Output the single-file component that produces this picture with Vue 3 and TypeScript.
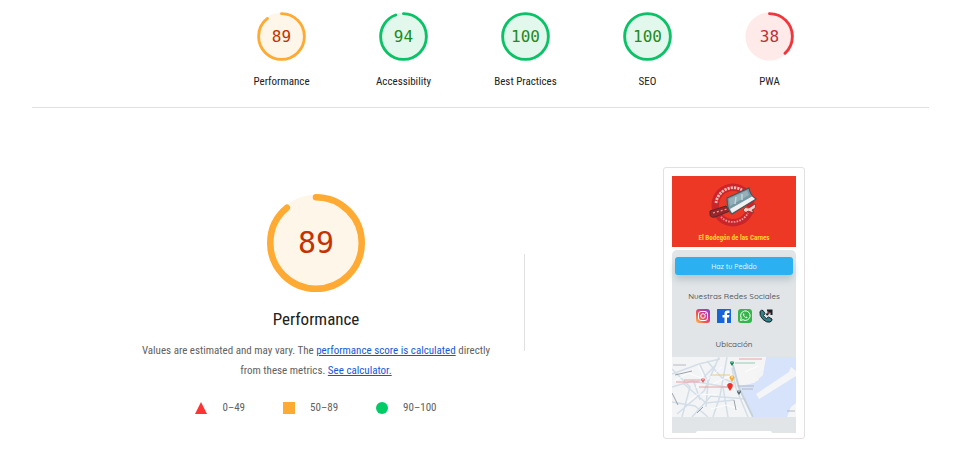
<script setup lang="ts">
type Level = 'pass' | 'average' | 'fail'

interface Category {
  id: string
  title: string
  score: number
}

const categories: Category[] = [
  { id: 'performance', title: 'Performance', score: 89 },
  { id: 'accessibility', title: 'Accessibility', score: 94 },
  { id: 'best-practices', title: 'Best Practices', score: 100 },
  { id: 'seo', title: 'SEO', score: 100 },
  { id: 'pwa', title: 'PWA', score: 38 },
]

const level = (score: number): Level =>
  score >= 90 ? 'pass' : score >= 50 ? 'average' : 'fail'

const dash = (score: number): string => (score === 100 ? 'none' : `${score} 100`)
</script>

<template>
  <main class="report">
    <nav class="categories" aria-label="Categories">
      <a
        v-for="c in categories"
        :key="c.id"
        class="category"
        :class="level(c.score)"
        :href="`#${c.id}`"
      >
        <span class="gauge">
          <svg viewBox="0 0 120 120" aria-hidden="true">
            <circle class="base" cx="60" cy="60" r="59" />
            <circle
              class="arc"
              cx="60"
              cy="60"
              r="56"
              pathLength="100"
              :stroke-dasharray="dash(c.score)"
              transform="rotate(-90 60 60)"
            />
          </svg>
          <span class="score">{{ c.score }}</span>
        </span>
        <span class="category-title">{{ c.title }}</span>
      </a>
    </nav>

    <section id="performance" class="detail">
      <div class="summary">
        <div class="gauge large average">
          <svg viewBox="0 0 120 120" aria-hidden="true">
            <circle class="base" cx="60" cy="60" r="59" />
            <circle
              class="arc"
              cx="60"
              cy="60"
              r="56"
              pathLength="100"
              stroke-dasharray="89 100"
              transform="rotate(-90 60 60)"
            />
          </svg>
          <span class="score">89</span>
        </div>
        <h1>Performance</h1>
        <p class="description">
          Values are estimated and may vary. The
          <a href="#score">performance score is calculated</a> directly from these metrics.
          <a href="#calculator">See calculator.</a>
        </p>
        <ul class="legend">
          <li>
            <svg viewBox="0 0 12 12" aria-hidden="true"><path d="M6 0 12 12H0Z" fill="#f33" /></svg>
            0–49
          </li>
          <li>
            <svg viewBox="0 0 12 12" aria-hidden="true"><path d="M0 0H12V12H0Z" fill="#fa3" /></svg>
            50–89
          </li>
          <li>
            <svg viewBox="0 0 12 12" aria-hidden="true"><circle cx="6" cy="6" r="6" fill="#0c6" /></svg>
            90–100
          </li>
        </ul>
      </div>

      <div class="preview">
        <div class="phone">
          <header class="banner">
            <svg class="logo" viewBox="0 0 50 46" aria-hidden="true">
              <circle cx="24" cy="23" r="21.500" fill="#c9252b" />
              <circle cx="24" cy="23" r="14" fill="#ed3826" />
              <path d="M7 21A17.500 17.500 0 0 1 33 8" fill="none" stroke="#f3b9b4" stroke-width="2.800" stroke-dasharray="2.200 1" />
              <path d="M12 35A17 17 0 0 0 39 31" fill="none" stroke="#e99f9b" stroke-width="1.800" stroke-dasharray="1.600 1.200" />
              <path d="M1 29 17 24 21 29 6 35Q1 36 1 32Z" fill="#98252b" stroke="#5e2528" />
              <path d="M4 31 18 27" stroke="#ed9c91" stroke-width="1.200" stroke-dasharray="2 2" />
              <path d="M18 16 40 6Q41 13 47 17L23 32Q18 29 18 16Z" fill="#7897a5" stroke="#4b5359" stroke-width="1.200" />
              <path d="M20 17 38 8.500 40 13 21 24Z" fill="#94b0bb" />
              <path d="M21 27 43 14.500 46 17 23 31Z" fill="#f1f2ef" />
              <path d="M27 15 26 22M33 12 33 18" stroke="#c3d3d8" stroke-width="1.500" />
              <path d="M34 28Q36 24 40 26L46 22Q48 26 43 28L45 31 39 29Q37 32 34 28Z" fill="#f5cdc6" stroke="#80332e" stroke-width=".8" />
            </svg>
            <strong>El Bodegón de las Carnes</strong>
          </header>
          <div class="page">
            <button type="button" class="order">Haz tu Pedido</button>
            <h2>Nuestras Redes Sociales</h2>
            <div class="social">
              <a href="#instagram" aria-label="Instagram">
                <svg viewBox="0 0 28 28">
                  <defs>
                    <linearGradient id="ig" x1="0" y1="1" x2="1" y2="0">
                      <stop offset="0" stop-color="#ffc25a" />
                      <stop offset=".35" stop-color="#f5564c" />
                      <stop offset=".65" stop-color="#c73b9b" />
                      <stop offset="1" stop-color="#7446cf" />
                    </linearGradient>
                  </defs>
                  <rect width="28" height="28" rx="6" fill="url(#ig)" />
                  <g fill="none" stroke="#fff" stroke-width="2">
                    <rect x="5" y="5" width="18" height="18" rx="5" />
                    <circle cx="14" cy="14" r="4.5" />
                  </g>
                  <circle cx="19.5" cy="8.5" r="1.3" fill="#fff" />
                </svg>
              </a>
              <a href="#facebook" aria-label="Facebook">
                <svg viewBox="0 0 28 28">
                  <rect width="28" height="28" rx="1" fill="#1764d8" />
                  <path d="M15 28V17H11V12H15V9Q15 3 21 3H25V8H22Q20 8 20 10V12H25L24 17H20V28Z" fill="#fff" />
                </svg>
              </a>
              <a href="#whatsapp" aria-label="WhatsApp">
                <svg viewBox="0 0 28 28">
                  <rect width="28" height="28" rx="6" fill="#35b64a" />
                  <path d="M5 23 6.5 18A9.5 9.5 0 1 1 10 21.5Z" fill="none" stroke="#fff" stroke-width="2" />
                  <path d="M10.5 9Q9 10 10 12.5Q12.5 18 17 18.5Q19 18.5 19 16.5L16.5 15 15 16.3Q13 15.5 12 13.5L13 12 12 9Z" fill="#fff" />
                </svg>
              </a>
              <a href="#phone" aria-label="Phone">
                <svg viewBox="0 0 28 28">
                  <path d="M2 5Q5 1 8 3L12 9 9 13Q11 17 15 19L19 16 26 20Q27 24 22 26Q16 28 8 21Q0 13 2 5Z" fill="#32828a" stroke="#172126" stroke-width="2" stroke-linejoin="round" />
                  <path d="M15 12 23 4M16 3H25V12" fill="none" stroke="#172126" stroke-width="4" />
                  <path d="M17 10 21 6" stroke="#ef5660" stroke-width="2" />
                </svg>
              </a>
            </div>
            <h2>Ubicación</h2>
            <svg class="map" viewBox="0 0 124 60" role="img" aria-label="Map">
              <rect width="124" height="60" fill="#f3f4f6" />
              <path d="M94 0H124V60H82L72 40 65 28 82 26 91 18Z" fill="#d7e3fb" />
              <path d="M65 0H94L91 12 84 17 87 23 78 27 67 29 60 12Z" fill="#f5f5f5" />
              <path d="M84 37 117 15 119 10 124 14V19L87 42Z" fill="#f4f5f7" />
              <path d="M115 60 119 50 124 46V60Z" fill="#f4f5f7" />
              <g fill="none" stroke="#d4dee7" stroke-width="1.5">
                <path d="M0 17 27 7 48 2M0 30 20 24 60 31M5 57 32 34 47 0M0 45 23 49 36 60M12 27 34 46 62 43M35 4 50 21 64 27M41 60 48 39 55 0M20 60 39 39 74 42M60 11 64 31 76 60M0 12 18 30 10 60" />
                <path d="M28 8 36 25 34 50M44 8 32 20M51 30 56 60M22 25 28 43" />
              </g>
              <g fill="none" stroke="#fff" stroke-width=".8">
                <path d="M2 24 16 16 35 23 50 10M15 45 26 37 45 38M26 8 31 18 24 31M39 52 54 48 67 52M41 27 60 18M73 15 86 9" />
              </g>
              <path d="M61 8 67 31 81 60" fill="none" stroke="#c6d2da" stroke-width="2" />
              <g fill="none" stroke="#858d97" stroke-width=".8">
                <path d="M3 18 20 14M0 36 6 48M25 56 31 50M62 43 64 53" />
              </g>
              <g fill="none" stroke-width=".9">
                <path d="M1 8H14M66 29H82M70 32H81M115 54H123" stroke="#aeb4ba" />
                <path d="M67 2H90M12 23H30M4 25H28M27 30H55" stroke="#e79a9b" />
                <path d="M39 18H58" stroke="#ecc380" />
                <path d="M63 6H83" stroke="#8fc7ab" />
              </g>
              <path d="M60 9 58 6A2 2 0 1 1 62 6Z" fill="#18855a" />
              <path d="M60 25 57.5 21A2.500 2.500 0 1 1 62.500 21Z" fill="#f0b13a" />
              <path d="M58 34 55.500 30A2.800 2.800 0 1 1 60.500 30Z" fill="#ea3328" />
              <path d="M31 26 29 23A2 2 0 1 1 33 23Z" fill="#e7656b" />
              <path d="M67 38 65 35A2 2 0 1 1 69 35Z" fill="#546b78" />
              <g fill="#fff">
                <circle cx="60" cy="5" r=".7" />
                <circle cx="60" cy="20" r=".8" />
                <circle cx="31" cy="22" r=".7" />
                <circle cx="67" cy="34" r=".8" />
              </g>
            </svg>
            <div class="next-card"></div>
          </div>
        </div>
      </div>
    </section>
  </main>
</template>

<style>
body {
  margin: 0;
  background: #fff;
}
</style>

<style scoped>
.report {
  padding: 12px 32px 20px;
  color: #212121;
  font-family: "Roboto Condensed", "Liberation Sans", sans-serif;
  font-size: 11px;
}

.categories {
  display: flex;
  justify-content: center;
  padding: 0 0 17px 90px;
  border-bottom: 1px solid #e0e0e0;
}

.category {
  display: flex;
  flex: 0 1 122px;
  flex-direction: column;
  align-items: center;
  gap: 12px;
  color: inherit;
  line-height: 17px;
  text-decoration: none;
}

.gauge {
  display: grid;
  width: 49px;
  height: 49px;
  place-items: center;
}

.gauge > * {
  grid-area: 1 / 1;
}

.gauge svg {
  width: 100%;
  height: 100%;
}

.base {
  fill: var(--tint);
}

.arc {
  fill: none;
  stroke: var(--tone);
  stroke-width: 7;
  stroke-linecap: round;
}

.score {
  color: var(--ink);
  font-family: "DejaVu Sans Mono", monospace;
  font-size: 16px;
  line-height: 1;
}

.pass {
  --tone: #0cc267;
  --tint: #e2f8ec;
  --ink: #218a21;
}

.average {
  --tone: #fa3;
  --tint: #fff6ea;
  --ink: #c33300;
}

.fail {
  --tone: #ee383d;
  --tint: #ffeaea;
  --ink: #b83239;
}

.category-title {
  color: #212121;
}

.detail {
  display: grid;
  grid-template-columns: 1fr 1fr;
  margin: 59px -14px 0 75px;
}

.summary {
  display: flex;
  flex-direction: column;
  align-items: center;
  padding-top: 27px;
  background: linear-gradient(#e0e0e0, #e0e0e0) right 87px / 1px 97px no-repeat;
}

.gauge.large {
  width: 98px;
  height: 98px;
}

.large .arc {
  stroke-width: 8;
}

.large .score {
  font-size: 30px;
}

h1 {
  margin: 15px 0 10px;
  font-size: 17px;
  font-weight: 400;
  line-height: 24px;
}

.description {
  max-width: 360px;
  margin: 0;
  color: #616161;
  line-height: 20px;
  text-align: center;
}

.description a {
  color: #1558d6;
}

.legend {
  display: flex;
  gap: 38px;
  margin: 18px 0 0;
  padding: 0;
  color: #616161;
  line-height: 18px;
  list-style: none;
}

.legend li {
  display: flex;
  align-items: center;
  gap: 15px;
}

.legend svg {
  width: 12px;
  height: 12px;
}

.preview {
  display: flex;
  align-items: flex-start;
  justify-content: center;
}

.phone {
  width: 124px;
  padding: 8px 8px 5px;
  border: 1px solid #e3dfe3;
  border-radius: 3px;
  font-family: Quicksand, Lato, sans-serif;
}

.banner {
  display: flex;
  flex-direction: column;
  align-items: center;
  justify-content: space-between;
  height: 71px;
  padding: 6px 0 4px;
  box-sizing: border-box;
  background: #ed3826;
}

.logo {
  width: 50px;
  height: 46px;
}

.banner strong {
  color: #ffd52e;
  font-family: "Roboto Condensed", "Liberation Sans", sans-serif;
  font-size: 7px;
  line-height: 9px;
}

.page {
  display: flex;
  flex-direction: column;
  align-items: stretch;
  margin-top: 3px;
  padding-top: 7px;
  border-radius: 5px 5px 0 0;
  background: #e1e5e8;
}

.order {
  height: 18px;
  margin: 0 3px;
  padding: 0;
  border: 0;
  border-radius: 3px;
  background: #2bb0f2;
  box-shadow: 0 5px 7px #bcc5ca;
  color: #e6f7ff;
  font: inherit;
  font-size: 7px;
  font-weight: 500;
}

h2 {
  margin: 15px 0 7px;
  color: #555c61;
  font-size: 8px;
  font-weight: 500;
  line-height: 12px;
  text-align: center;
}

.social {
  display: flex;
  justify-content: center;
  gap: 7px;
}

.social a,
.social svg {
  display: block;
  width: 14px;
  height: 14px;
}

.map {
  display: block;
  width: 100%;
}

.next-card {
  width: 76px;
  height: 2px;
  margin: 14px auto 0;
  border-radius: 3px 3px 0 0;
  background: #fff;
}
</style>
